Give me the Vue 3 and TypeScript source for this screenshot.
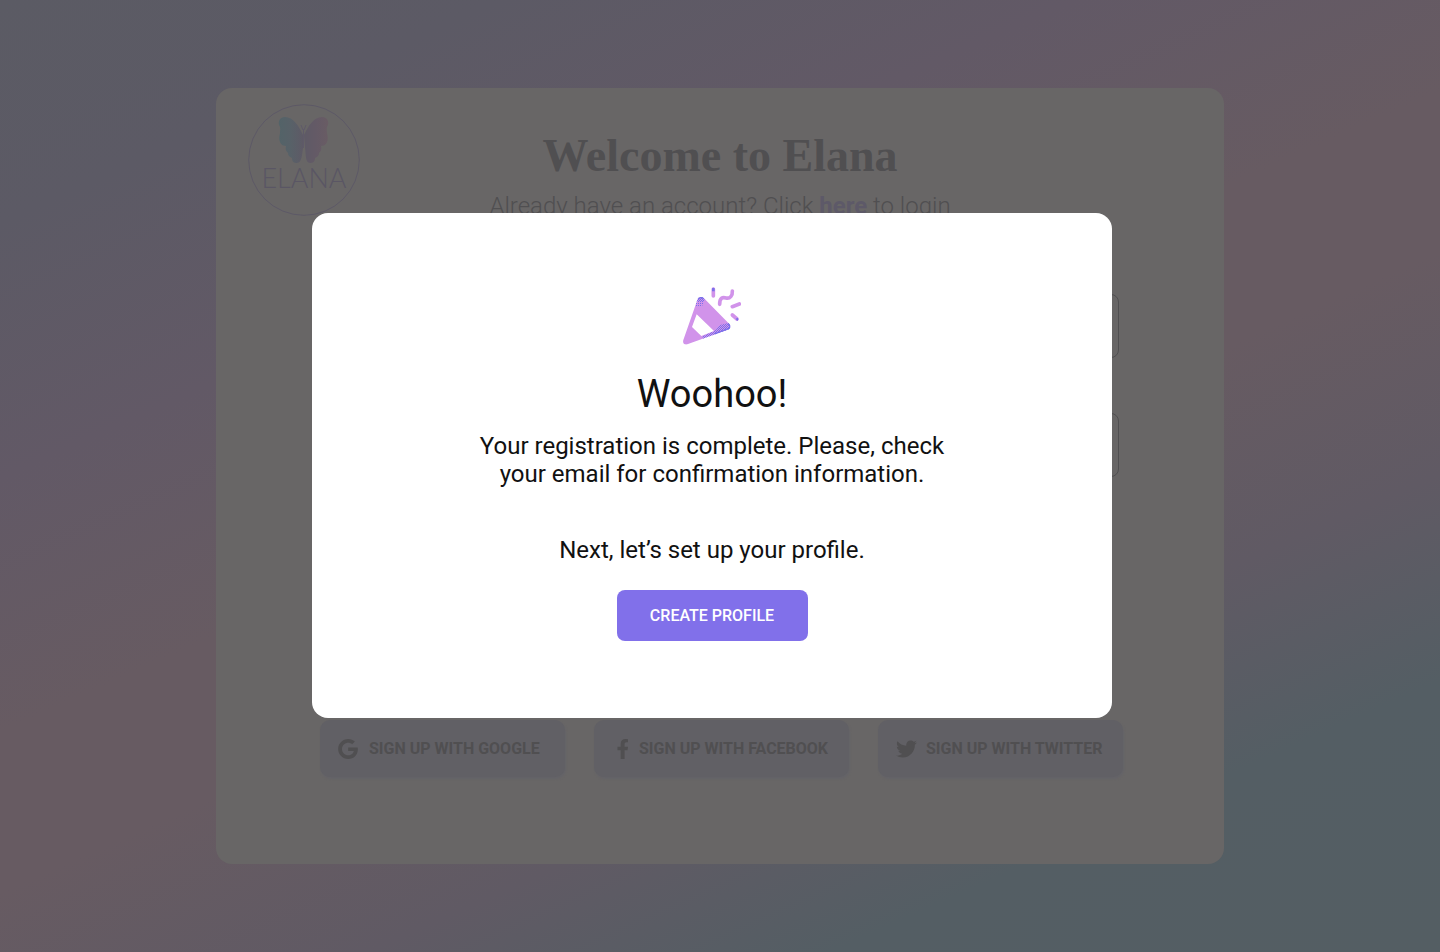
<script setup lang="ts">
import { ref } from 'vue'

interface Provider {
  id: string
  label: string
  viewBox: string
  width: number
  height: number
  path: string
}

const email = ref('')
const password = ref('')

const providers: Provider[] = [
  {
    id: 'google',
    label: 'SIGN UP WITH GOOGLE',
    viewBox: '0 8 488 496',
    width: 20,
    height: 20,
    path: 'M488 261.8C488 403.3 391.1 504 248 504 110.8 504 0 393.2 0 256S110.8 8 248 8c66.8 0 123 24.5 166.3 64.9l-67.5 64.9C258.5 52.6 94.3 116.6 94.3 256c0 86.5 69.1 156.6 153.7 156.6 98.2 0 135-70.4 140.8-106.9H248v-85.3h236.1c2.3 12.7 3.9 24.9 3.9 41.4z',
  },
  {
    id: 'facebook',
    label: 'SIGN UP WITH FACEBOOK',
    viewBox: '22 0 258 512',
    width: 11,
    height: 20,
    path: 'M279.14 288l14.22-92.66h-88.91v-60.13c0-25.35 12.42-50.06 52.24-50.06h40.42V6.26S260.43 0 225.36 0c-73.22 0-121.08 44.38-121.08 124.72v70.62H22.89V288h81.39v224h100.17V288z',
  },
  {
    id: 'twitter',
    label: 'SIGN UP WITH TWITTER',
    viewBox: '0 48 512 416',
    width: 21,
    height: 18,
    path: 'M459.37 151.716c.325 4.548.325 9.097.325 13.645 0 138.72-105.583 298.558-298.558 298.558-59.452 0-114.68-17.219-161.137-47.106 8.447.974 16.568 1.299 25.34 1.299 49.055 0 94.213-16.568 130.274-44.832-46.132-.975-84.792-31.188-98.112-72.772 6.498.974 12.995 1.624 19.818 1.624 9.421 0 18.843-1.3 27.614-3.573-48.081-9.747-84.143-51.98-84.143-102.985v-1.299c13.969 7.797 30.214 12.67 47.431 13.319-28.264-18.843-46.781-51.005-46.781-87.391 0-19.492 5.197-37.36 14.294-52.954 51.655 63.675 129.3 105.258 216.365 109.807-1.624-7.797-2.599-15.918-2.599-24.04 0-57.828 46.782-104.934 104.934-104.934 30.213 0 57.502 12.67 76.67 33.137 23.715-4.548 46.456-13.32 66.599-25.34-7.798 24.366-24.366 44.833-46.132 57.827 21.117-2.273 41.584-8.122 60.426-16.243-14.292 20.791-32.161 39.308-52.628 54.253z',
  },
]
</script>

<template>
  <div class="page">
    <main class="card">
      <svg class="logo" viewBox="0 0 112 112" role="img" aria-label="Elana">
        <defs>
          <linearGradient id="wing-left" x1="0" x2="1" y1="0" y2="0">
            <stop offset="0" stop-color="#536368" />
            <stop offset="0.5" stop-color="#586168" />
            <stop offset="1" stop-color="#5e5a66" />
          </linearGradient>
          <linearGradient id="wing-right" x1="0" x2="1" y1="0" y2="0">
            <stop offset="0" stop-color="#5e5a66" />
            <stop offset="0.5" stop-color="#645a66" />
            <stop offset="1" stop-color="#695c64" />
          </linearGradient>
        </defs>
        <circle class="ring" cx="56" cy="56" r="55.3" />
        <path
          fill="url(#wing-left)"
          d="M55 31C51 22 45 13 37 13c-5 0-7 4-6 8 2 3 1 5 1 8-1 4-1 7 0 9 1 3 4 4 6 4-1 3 0 5 2 7 0 3 2 4 4 5 0 4 2 5 5 5 5 0 5-9 6-15Z"
        />
        <path
          fill="url(#wing-right)"
          d="M56 31C60 22 66 13 74 13c5 0 7 4 6 8-2 3-1 5-1 8 1 4 1 7 0 9-1 3-4 4-6 4 1 3 0 5-2 7 0 3-2 4-4 5 0 4-2 5-5 5-5 0-4-9-5-15Z"
        />
        <path class="feeler" d="M55.500 44V25M55 26l-2-5M56 26l2-5" />
        <text class="logo-name" x="56" y="84" text-anchor="middle">ELANA</text>
      </svg>

      <h1 class="title">Welcome to Elana</h1>
      <p class="subtitle">Already have an account? Click <a href="#login">here</a> to login</p>

      <form class="form" @submit.prevent>
        <input v-model="email" class="field" type="email" aria-label="Email" />
        <input v-model="password" class="field" type="password" aria-label="Password" />
      </form>

      <div class="providers">
        <button v-for="p in providers" :key="p.id" type="button" :class="['provider', p.id]">
          <svg :width="p.width" :height="p.height" :viewBox="p.viewBox" aria-hidden="true">
            <path :d="p.path" fill="currentColor" />
          </svg>
          <span>{{ p.label }}</span>
        </button>
      </div>
    </main>

    <div class="overlay">
      <section class="modal" role="dialog" aria-modal="true" aria-labelledby="modal-title">
        <svg class="popper" viewBox="39 36 174 174" aria-hidden="true">
          <defs>
            <pattern id="dots" width="6" height="6" patternUnits="userSpaceOnUse">
              <g fill="#7b70ea" shape-rendering="crispEdges">
                <rect width="3" height="3" />
                <rect x="3" y="3" width="3" height="3" />
              </g>
            </pattern>
            <pattern id="dots-light" width="6" height="6" patternUnits="userSpaceOnUse">
              <rect width="3" height="3" fill="#7b70ea" shape-rendering="crispEdges" />
            </pattern>
            <clipPath id="cone">
              <path
                clip-rule="evenodd"
                d="M83 72C87 64 96 64 102 70L178 147C184 153 181 162 173 164L52 208C43 211 37 204 40 195ZM80 118 66 156 94 183 132 168Z"
              />
            </clipPath>
          </defs>
          <g clip-path="url(#cone)">
            <rect x="30" y="60" width="160" height="155" fill="#d193ea" />
            <path fill="url(#dots)" d="M70 60H110L100 81H78Z" />
            <path fill="url(#dots-light)" d="M76 81H104L94 96H76Z" />
            <path fill="url(#dots)" d="M135 168 150 150 174 144 190 150V170L135 182Z" />
            <path fill="url(#dots)" d="M98 184 140 164V182L98 196Z" />
            <path
              fill="none"
              stroke="#7b70ea"
              stroke-width="7"
              d="M176 144Q188 160 172 164L134 178M84 72Q92 62 102 70"
            />
          </g>
          <g class="sparks">
            <path d="M130 42V63" />
            <path d="M149 88C149 68 158 66 168 69C180 72 188 62 187 48" />
            <path d="M187 95 208 87" />
            <path d="M187 120 201 132" />
          </g>
          <path fill="#7b70ea" d="M126 40Q130 36 134 40V49H126ZM197 131 203 128Q208 133 202 138Z" />
        </svg>
        <h2 id="modal-title" class="modal-title">Woohoo!</h2>
        <p class="message">
          Your registration is complete. Please, check<br />your email for confirmation information.
        </p>
        <p class="next">Next, let’s set up your profile.</p>
        <button type="button" class="create">CREATE PROFILE</button>
      </section>
    </div>
  </div>
</template>

<style>
body {
  margin: 0;
}
</style>

<style scoped>
.page {
  box-sizing: border-box;
  min-height: 100vh;
  padding: 88px 15%;
  font-family: Roboto, 'Liberation Sans', sans-serif;
  background: linear-gradient(
    156deg,
    #5b5b64 0%,
    #5c5a65 14%,
    #625966 30%,
    #675b62 46%,
    #675b62 56%,
    #605a64 70%,
    #545e64 83%,
    #545e63 100%
  );
}

.card {
  position: relative;
  box-sizing: border-box;
  min-height: calc(100vh - 176px);
  padding: 40px 100px 86px;
  border-radius: 16px;
  background: #686666;
  color: #504f51;
}

.logo {
  position: absolute;
  top: 16px;
  left: 32px;
  width: 112px;
  height: 112px;
}

.ring {
  fill: none;
  stroke: #5d5966;
}

.feeler {
  fill: none;
  stroke: #5f5a69;
}

.logo-name {
  fill: #5a5664;
  font-family: Lato, sans-serif;
  font-size: 27px;
  font-weight: 300;
}

.title {
  margin: 0;
  font-family: 'Liberation Serif', serif;
  font-size: 46px;
  font-weight: 700;
  line-height: 56px;
  text-align: center;
}

.subtitle {
  margin: 4px 0 0;
  font-size: 24px;
  font-weight: 300;
  line-height: 36px;
  text-align: center;
}

.subtitle a {
  color: #5d5968;
  font-weight: 700;
  text-decoration: none;
}

.form {
  display: flex;
  flex-direction: column;
  gap: 55px;
  margin: 70px 5px 0;
}

.field {
  box-sizing: border-box;
  width: 100%;
  height: 64px;
  padding: 0 16px;
  border: 1px solid #504f51;
  border-radius: 8px;
  background: transparent;
  color: inherit;
  font: inherit;
}

.providers {
  display: grid;
  grid-template-columns: 245fr 255fr 245fr;
  gap: 29px;
  margin: 243px 1px 0 4px;
}

.provider {
  display: flex;
  align-items: center;
  justify-content: flex-start;
  gap: 11px;
  height: 57px;
  padding: 0 12px 0 18px;
  border: 0;
  border-radius: 10px;
  background: #616065;
  box-shadow: 1px 2px 2px #646368;
  color: #504f51;
  font-family: inherit;
  font-size: 16px;
  font-weight: 700;
  white-space: nowrap;
}

.provider.facebook {
  padding-left: 23px;
}

.provider.twitter {
  gap: 9px;
}

.overlay {
  position: fixed;
  inset: 0;
  display: flex;
  align-items: center;
  justify-content: center;
  padding: 0 16px 21px 0;
}

.modal {
  box-sizing: border-box;
  display: flex;
  flex-direction: column;
  align-items: center;
  width: 100%;
  max-width: 800px;
  padding: 74px 24px 77px;
  border-radius: 16px;
  background: #fff;
  color: #111;
  text-align: center;
}

.popper {
  width: 58px;
  height: 58px;
}

.sparks {
  fill: none;
  stroke: #d193ea;
  stroke-width: 11;
  stroke-linecap: round;
}

.modal-title {
  margin: 25px 0 0;
  font-size: 38px;
  font-weight: 400;
  line-height: 48px;
}

.message {
  margin: 14px 0 0;
  font-size: 24px;
  line-height: 28px;
}

.next {
  margin: 48px 0 0;
  font-size: 24px;
  line-height: 28px;
}

.create {
  min-width: 191px;
  height: 51px;
  margin-top: 26px;
  padding: 0 24px;
  border: 0;
  border-radius: 8px;
  background: #8170ea;
  color: #fff;
  font-family: inherit;
  font-size: 16px;
  font-weight: 500;
}
</style>
